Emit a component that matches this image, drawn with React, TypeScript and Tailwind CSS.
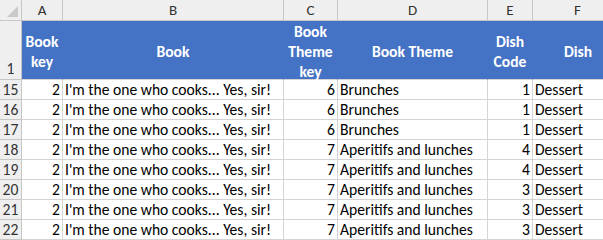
const cols = ["A", "B", "C", "D", "E", "F"];

const rows = [
  { n: 15, key: 2, book: "I'm the one who cooks... Yes, sir!", tk: 6, theme: "Brunches", code: 1, dish: "Dessert" },
  { n: 16, key: 2, book: "I'm the one who cooks... Yes, sir!", tk: 6, theme: "Brunches", code: 1, dish: "Dessert" },
  { n: 17, key: 2, book: "I'm the one who cooks... Yes, sir!", tk: 6, theme: "Brunches", code: 1, dish: "Dessert" },
  { n: 18, key: 2, book: "I'm the one who cooks... Yes, sir!", tk: 7, theme: "Aperitifs and lunches", code: 4, dish: "Dessert" },
  { n: 19, key: 2, book: "I'm the one who cooks... Yes, sir!", tk: 7, theme: "Aperitifs and lunches", code: 4, dish: "Dessert" },
  { n: 20, key: 2, book: "I'm the one who cooks... Yes, sir!", tk: 7, theme: "Aperitifs and lunches", code: 3, dish: "Dessert" },
  { n: 21, key: 2, book: "I'm the one who cooks... Yes, sir!", tk: 7, theme: "Aperitifs and lunches", code: 3, dish: "Dessert" },
  { n: 22, key: 2, book: "I'm the one who cooks... Yes, sir!", tk: 7, theme: "Aperitifs and lunches", code: 3, dish: "Dessert" },
];

const heads = ["Book key", "Book", "Book Theme key", "Book Theme", "Dish Code", "Dish"];

export default function App() {
  return (
    <div
      className="w-[603px] h-[240px] overflow-hidden bg-white text-[15.6px] text-black"
      style={{ fontFamily: "Carlito, Calibri, Lato, 'Liberation Sans', sans-serif" }}
    >
      <div className="grid grid-cols-[22px_41px_221px_54px_150px_45px_90px] grid-rows-[21px_59px_repeat(8,20px)]">
        {/* corner */}
        <div className="bg-[#efefef] border-r border-b border-[#c6c6c6] flex items-end justify-end p-[3px]">
          <svg width="11" height="11" viewBox="0 0 11 11">
            <polygon points="11,0 11,11 0,11" fill="#c9c9c9" />
          </svg>
        </div>
        {cols.map((c) => (
          <div
            key={c}
            className="bg-[#efefef] border-r border-b border-[#c6c6c6] flex items-center justify-center leading-none text-[15px] text-[#333]"
          >
            {c}
          </div>
        ))}

        {/* header row 1 */}
        <div className="bg-[#efefef] border-r border-b border-[#c6c6c6] flex items-end justify-center pb-[1px] leading-[18px] text-[#333]">
          1
        </div>
        {heads.map((h, i) => (
          <div
            key={h}
            className={
              "bg-[#4472c4] border-b border-[#d4d4d4] flex items-center justify-center text-center font-bold text-white leading-[20px] pt-[3px] px-[2px]" +
              (i === 5 ? "" : " border-r border-r-[#4472c4]")
            }
          >
            {h}
          </div>
        ))}

        {rows.map((r) => (
          <RowCells key={r.n} r={r} />
        ))}
      </div>
    </div>
  );
}

function RowCells({ r }: { r: (typeof rows)[number] }) {
  const cell = "border-r border-b border-[#d4d4d4] flex items-end leading-[19px] whitespace-nowrap overflow-hidden";
  return (
    <>
      <div className="bg-[#efefef] border-r border-b border-[#c6c6c6] flex items-end justify-center leading-[19px] text-[#333]">
        {r.n}
      </div>
      <div className={cell + " justify-end pr-[2px]"}>{r.key}</div>
      <div className={cell + " pl-[2px]"}>{r.book}</div>
      <div className={cell + " justify-end pr-[2px]"}>{r.tk}</div>
      <div className={cell + " pl-[2px]"}>{r.theme}</div>
      <div className={cell + " justify-end pr-[2px]"}>{r.code}</div>
      <div className={cell + " pl-[2px]"}>{r.dish}</div>
    </>
  );
}
